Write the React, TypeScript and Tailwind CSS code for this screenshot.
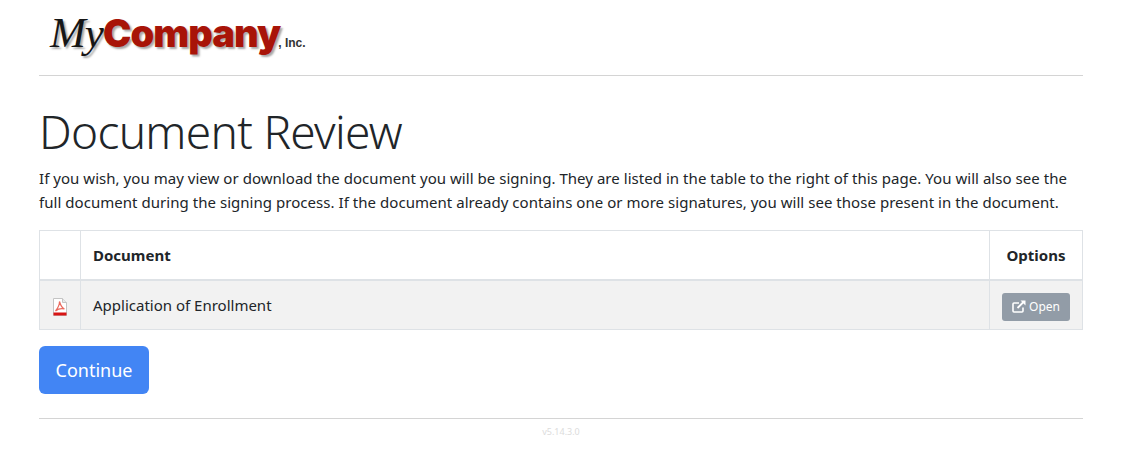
import React from 'react';

const PdfIcon = () => (
  <svg width="16" height="18" viewBox="0 0 16 18">
    <path d="M1.5 .5H10.5L14.5 4.5V17.5H1.5Z" fill="#fff" stroke="#c4c4c4" />
    <path d="M10.5 .5V4.5H14.5" fill="#e8e8e8" stroke="#c4c4c4" />
    <path
      d="M7.5 3.5C7.5 7 6 10 3.5 13C6 11 9.5 10.3 12.5 11C10 10 8.5 7 7.5 3.5Z"
      fill="none"
      stroke="#ea6a5e"
      strokeWidth="1.2"
    />
    <rect x="1.5" y="14.5" width="13" height="3" fill="#d81414" />
  </svg>
);

const OpenIcon = () => (
  <svg width="14" height="13" viewBox="0 0 14 13" fill="none" stroke="currentColor">
    <path d="M11 7.5V11C11 11.6 10.6 12 10 12H2C1.4 12 1 11.6 1 11V4C1 3.4 1.4 3 2 3H7" strokeWidth="1.6" />
    <path d="M5.5 8L12 1.5" strokeWidth="1.8" />
    <path d="M8.5 .5H13.5V5.5Z" fill="currentColor" stroke="none" />
  </svg>
);

const Logo = () => (
  <div className="flex items-baseline h-[56px] pl-[11px] select-none">
    <span
      className="text-[43px] leading-[48px] italic text-[#161616] tracking-[-1px] [text-shadow:2px_2px_2px_#a8a8a8]"
      style={{ fontFamily: '"Liberation Serif", serif' }}
    >
      My
    </span>
    <span
      className="text-[38px] leading-[48px] font-black text-[#a81408] tracking-[-0.9px] [text-shadow:2px_2px_2px_#a8a8a8]"
      style={{ fontFamily: 'Inter, sans-serif' }}
    >
      Company
    </span>
    <span
      className="-ml-[2px] text-[12px] font-bold text-[#333]"
      style={{ fontFamily: '"Liberation Sans", sans-serif' }}
    >
      , Inc.
    </span>
  </div>
);

const App = () => {
  return (
    <div
      className="w-[1122px] h-[460px] bg-white px-[39px] pt-[9px] text-[#212529] overflow-hidden"
      style={{ fontFamily: '"Noto Sans", sans-serif' }}
    >
      <Logo />
      <hr className="mt-[10px] border-t border-[#d4d4d4]" />
      <h1 className="mt-[26px] text-[46px] leading-[58px] font-light tracking-[-0.7px]">Document Review</h1>
      <p className="mt-[6px] text-[15px] leading-[24px] tracking-[0.04px]">
        If you wish, you may view or download the document you will be signing. They are listed in the table to the
        right of this page. You will also see the full document during the signing process. If the document already
        contains one or more signatures, you will see those present in the document.
      </p>
      <table className="mt-[16px] w-full border-collapse text-[15px]">
        <thead>
          <tr className="h-[49px]">
            <th className="w-[41px] border border-b-2 border-[#dee2e6]"></th>
            <th className="pl-[12px] text-left font-bold border border-b-2 border-[#dee2e6]">Document</th>
            <th className="w-[93px] text-center font-bold border border-b-2 border-[#dee2e6]">Options</th>
          </tr>
        </thead>
        <tbody>
          <tr className="h-[50px] bg-[#f2f2f2]">
            <td className="border border-[#dee2e6]">
              <div className="flex justify-center pt-[4px]">
                <PdfIcon />
              </div>
            </td>
            <td className="pl-[12px] border border-[#dee2e6]">Application of Enrollment</td>
            <td className="border border-[#dee2e6]">
              <div className="flex justify-center pt-[4px]">
                <button className="w-[68px] h-[28px] flex items-center justify-center gap-[3px] rounded-[3px] bg-[#929ca7] text-white text-[12px]">
                  <OpenIcon />
                  Open
                </button>
              </div>
            </td>
          </tr>
        </tbody>
      </table>
      <button className="mt-[16px] w-[110px] h-[48px] rounded-[6px] bg-[#4285f4] text-white text-[18px]">Continue</button>
      <hr className="mt-[24px] border-t border-[#d4d4d4]" />
      <div className="mt-[7px] text-center text-[9px] leading-[12px] text-[#dcdcdc]">v5.14.3.0</div>
    </div>
  );
};

export default App;
